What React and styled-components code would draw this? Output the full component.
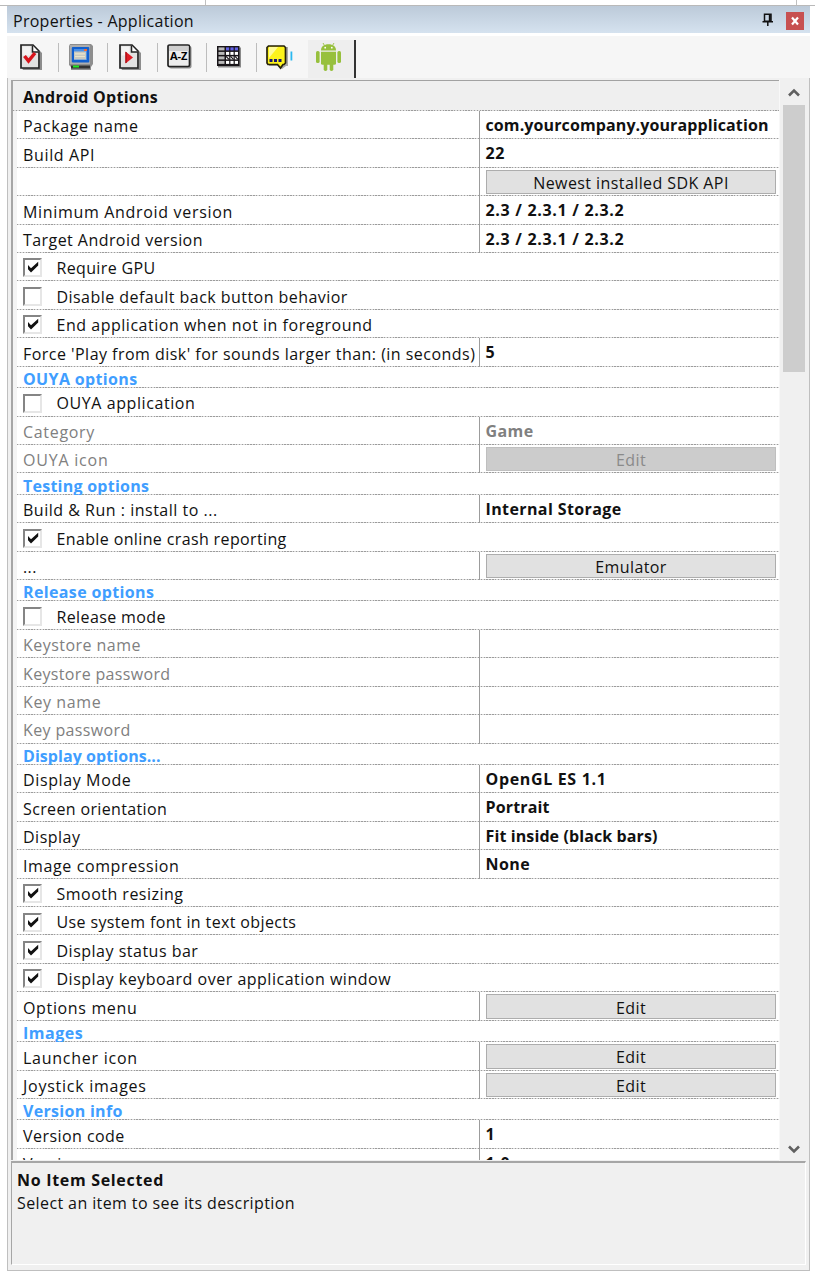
import React from "react";
import styled, { createGlobalStyle, css } from "styled-components";

const GlobalStyle = createGlobalStyle`
  html, body { margin: 0; padding: 0; background: #fff; }
  body {
    font-family: "Open Sans", "Noto Sans", sans-serif;
    font-size: 16px;
    color: #111;
    overflow: hidden;
  }
  *, *::before, *::after { box-sizing: border-box; }
`;

const ROW = "28.45px";
const HEADING = "21.34px";

const dotted = css`
  background-image: repeating-linear-gradient(90deg, #9c9c9c 0 1.42px, #dcdcdc 1.42px 2.845px);
  background-size: 100% 1px;
  background-repeat: no-repeat;
  background-position: left bottom;
`;

const Page = styled.div`
  display: flex;
  flex-direction: column;
  width: 815px;
  height: 1276px;
  background: #fff;
`;

const TopEdge = styled.div`
  display: flex;
  height: 6px;
  border-bottom: 1.5px solid #b9b9b9;
`;

const TopEdgeCell = styled.div`
  width: ${(p) => p.$w}px;
  border-right: 1px solid #c0c0c0;
`;

const Panel = styled.div`
  display: flex;
  flex-direction: column;
  width: 803px;
  margin-left: 7px;
`;

const TitleBar = styled.div`
  display: flex;
  align-items: center;
  height: 27px;
  padding: 0 6px;
  background: linear-gradient(#bccad9, #d5e2ef);
`;

const Title = styled.div`
  flex: 1;
  line-height: 27px;
  padding-top: 3px;
  letter-spacing: 0.27px;
`;

const CloseButton = styled.button`
  display: flex;
  align-items: center;
  justify-content: center;
  width: 18px;
  height: 18px;
  margin: 2px 0 0 12px;
  padding: 0;
  border: 0;
  background: #c75050;
`;

const Toolbar = styled.div`
  display: flex;
  height: 42px;
  margin-top: 3px;
  padding: 4px 0 0 2px;
  background: #f6f6f6;
`;

const Tool = styled.div`
  display: flex;
  width: 49.5px;
  height: 29px;
  margin-top: 3px;
  padding: 0 0 0 8px;
  border-right: ${(p) => (p.$last ? "0" : "1px solid #bdbdbd")};
`;

const ActiveTool = styled.div`
  display: flex;
  width: 48px;
  height: 38px;
  padding: 2px 0 0 7px;
  margin-left: 2px;
  background: #eeeeee;
  border-right: 2px solid #333;
`;

const Body = styled.div`
  display: flex;
  flex-direction: column;
  height: 1193px;
  padding: 2px 4px 0 3px;
  background: #f0f0f0;
  border: solid #bfbfbf;
  border-width: 0 1px 1.5px 1px;
`;

const ListArea = styled.div`
  display: flex;
  height: 1082px;
`;

const List = styled.div`
  width: 768px;
  height: 1080px;
  overflow: hidden;
  background: #fff;
  border-top: 1px solid #a2a2a2;
  border-left: 2px solid #a6a6a6;
`;

const ListInner = styled.div`
  padding-left: 4px;
  width: 766px;
  background: linear-gradient(90deg, #f4f4f4 4px, transparent 4px);
`;

const ListHeader = styled.div`
  ${dotted}
  height: 29.8px;
  margin-left: -4px;
  padding: 2px 0 0 10px;
  line-height: 28px;
  font-weight: 700;
  letter-spacing: 0.26px;
  background-color: #efefef;
`;

const Heading = styled.div`
  ${dotted}
  height: ${HEADING};
  padding: 2.2px 0 0 6px;
  overflow: hidden;
  line-height: ${HEADING};
  font-weight: 700;
  color: #409eff;
  white-space: nowrap;
  letter-spacing: ${(p) => p.$track}px;
`;

const Row = styled.div`
  ${dotted}
  display: flex;
  height: ${ROW};
  color: ${(p) => (p.$disabled ? "#808080" : "#111")};
`;

const Label = styled.div`
  width: 463px;
  padding: 1.4px 0 0 6px;
  line-height: ${ROW};
  white-space: nowrap;
  letter-spacing: ${(p) => p.$track}px;
  ${(p) => p.$divided && css`border-right: 1px solid #9c9c9c;`}
`;

const Value = styled.div`
  flex: 1;
  padding-left: 5.5px;
  line-height: 28px;
  font-weight: 700;
  white-space: nowrap;
  letter-spacing: ${(p) => p.$track}px;
`;

const PushButton = styled.button`
  width: 290px;
  height: 24.5px;
  margin: 2px 0 0 6px;
  padding: 2px 0 0;
  border: 1.5px solid ${(p) => (p.$disabled ? "#bfbfbf" : "#adadad")};
  background: ${(p) => (p.$disabled ? "#cccccc" : "#e1e1e1")};
  color: ${(p) => (p.$disabled ? "#8a8a8a" : "#111")};
  font: 16px/20px "Open Sans", "Noto Sans", sans-serif;
  letter-spacing: 0.42px;
`;

const CheckRow = styled(Row)`
  padding-left: 6px;
`;

const Box = styled.span`
  display: flex;
  width: 19px;
  height: 19px;
  margin-top: 5.5px;
  border: 2px solid;
  border-color: #858585 #e6e6e6 #e6e6e6 #858585;
  background: #fff;
`;

const CheckText = styled.span`
  padding: 1.4px 0 0 14.5px;
  line-height: ${ROW};
  white-space: nowrap;
  letter-spacing: ${(p) => p.$track}px;
`;

const Scrollbar = styled.div`
  display: flex;
  flex-direction: column;
  align-items: center;
  width: 26px;
  padding-left: 3px;
  border-left: 1px solid #f8f8f8;
`;

const Arrow = styled.div`
  display: flex;
  align-items: center;
  justify-content: center;
  width: 22px;
  height: 25px;
`;

const Track = styled.div`
  flex: 1;
  width: 22px;
`;

const Thumb = styled.div`
  height: 267px;
  background: #cdcdcd;
`;

const Description = styled.div`
  height: 104px;
  width: 795px;
  padding: 5.5px 0 0 5px;
  margin-top: -1px;
  border: solid;
  border-width: 2px 1px 1px 1px;
  border-color: #a6a6a6 #fff #fff #a6a6a6;
`;

const DescriptionTitle = styled.div`
  line-height: 23px;
  font-weight: 700;
  letter-spacing: 0.69px;
`;

const DescriptionText = styled.div`
  line-height: 23px;
  letter-spacing: 0.4px;
`;

const PageShape = () => (
  <>
    <path d="M5 25h18V8l2 2v17H6z" fill="#8d8d8d" />
    <path d="M4 2h12l6 6v17H4z" fill="#e2e2e2" stroke="#222" strokeWidth="1.7" />
    <path d="M5.5 3.5h8v9h-8z" fill="#f3f3f3" />
    <path d="M15.5 2.5v6.5h6" fill="#fff" stroke="#222" strokeWidth="1.5" />
  </>
);

const SettingsIcon = () => (
  <svg width="28" height="28" viewBox="0 0 28 28">
    <PageShape />
    <path d="M7.5 13l4 5 6.500-8" fill="none" stroke="#d8141c" strokeWidth="3.500" />
  </svg>
);

const WindowIcon = () => (
  <svg width="28" height="28" viewBox="0 0 28 28">
    <path d="M3 1h21l2 2v18l-2 3v3H4v-3l-2-2V3z" fill="#8e8e8e" />
    <path d="M3 2h19l1 1v18H3z" fill="#adadad" />
    <rect x="4.8" y="4" width="17.500" height="15.500" rx="1" fill="#1260cf" />
    <rect x="7" y="6" width="13" height="11" fill="#4b90e4" />
    <rect x="7" y="8.5" width="12" height="8" fill="#c9c9c0" />
    <path d="M8 10.8h10M8 13.5h10" stroke="#e9e5ca" strokeWidth="1.2" />
    <rect x="17" y="6" width="3" height="2" fill="#f06a35" />
    <rect x="4" y="22.500" width="19" height="3" fill="#333" />
    <rect x="6" y="22.500" width="6" height="2" fill="#1ee61e" />
  </svg>
);

const RuntimeIcon = () => (
  <svg width="28" height="28" viewBox="0 0 28 28">
    <PageShape />
    <path d="M9.5 8.5l7.5 6-7.5 6z" fill="#e01b24" />
    <path d="M10 9v11" stroke="#a60d14" strokeWidth="1.3" />
  </svg>
);

const GlyphText = styled.text`
  font: 700 10px "Open Sans", sans-serif;
`;

const AboutIcon = () => (
  <svg width="28" height="28" viewBox="0 0 28 28">
    <rect x="3" y="3" width="22.5" height="22.5" rx="2" fill="#909090" />
    <rect x="2" y="2" width="21.5" height="21.5" rx="1.5" fill="#ececec" stroke="#222" strokeWidth="1.7" />
    <rect x="3" y="3" width="19.5" height="5" fill="#cfcfcf" />
    <GlyphText x="4" y="16.500" textLength="17.500" lengthAdjust="spacingAndGlyphs">A-Z</GlyphText>
  </svg>
);

const GridIcon = () => (
  <svg width="28" height="28" viewBox="0 0 28 28">
    <rect x="3" y="4.500" width="23" height="20" fill="#8a8a8a" />
    <rect x="2" y="3" width="22.500" height="20" fill="#181418" />
    {[0, 1, 2, 3].map((r) => (
      <React.Fragment key={r}>
        <rect x="3.5" y={4.4 + r * 4.5} width="6" height="3" fill="#b9b9b9" />
        {[0, 1, 2].map((c) => (
          <rect key={c} x={11 + c * 4.4} y={4.4 + r * 4.5} width="3.2" height="3" fill={r === 0 ? "#6262e6" : "#fff"} />
        ))}
      </React.Fragment>
    ))}
    <path d="M11 13.400l3 3M15.5 13.400l3 3M20 13.400l3 3" stroke="#181418" strokeWidth="1.2" />
  </svg>
);

const EventsIcon = () => (
  <svg width="28" height="28" viewBox="0 0 28 28">
    <path d="M4 4h19v19h-2l-4 3-4-3H4z" fill="#a8a8a8" />
    <path d="M3.5 3h15.5l1.5 1.5v15.5l-1.5 1.5h-1l-2.5 3.500-3-3.500h-9.500l-1-1.5V4.500z" fill="#fdf31c" stroke="#26220a" strokeWidth="1.7" />
    <path d="M4 4h9L4 15z" fill="#fffb9a" />
    <path d="M4.500 16h3v3h-3zM9 16h3v3h-3zM13.500 16h3v3h-3z" fill="#15156e" />
    <rect x="25.5" y="8.500" width="1.8" height="9" fill="#2ab8f0" />
  </svg>
);

const AndroidIcon = () => (
  <svg width="28" height="30" viewBox="0 0 28 30">
    <g fill="#97c03d">
      <path d="M6 8.5C6 4.5 9 2.3 13.5 2.3S21 4.5 21 8.5z" />
      <path d="M6 9.7h15v11.500a1.5 1.5 0 0 1-1.5 1.5h-12A1.5 1.5 0 0 1 6 21.2z" />
      <rect x="1" y="9" width="3.6" height="12" rx="1.6" />
      <rect x="22.4" y="9" width="3.6" height="12" rx="1.6" />
      <rect x="8.7" y="20" width="3.6" height="9" rx="1.7" />
      <rect x="14.7" y="20" width="3.6" height="9" rx="1.7" />
    </g>
    <path d="M9.5 3.5L8 1M17.5 3.5L19 1" stroke="#97c03d" strokeWidth="0.9" />
    <circle cx="10.2" cy="5.7" r="0.9" fill="#fff" />
    <circle cx="16.8" cy="5.7" r="0.9" fill="#fff" />
  </svg>
);

const PinIcon = () => (
  <svg width="12" height="14" viewBox="0 0 12 14">
    <path d="M2.5 1.2h6.500v7H2.5zM0.5 8.7h10.500M5.8 9v4" fill="none" stroke="#111" strokeWidth="1.5" />
    <path d="M7.8 1v7.5" stroke="#111" strokeWidth="2" />
  </svg>
);

const CloseIcon = () => (
  <svg width="10" height="10" viewBox="0 0 10 10">
    <path d="M2 1.5l6 7M8 1.5l-6 7" stroke="#fff" strokeWidth="2.2" />
  </svg>
);

const CheckMark = () => (
  <svg width="15" height="15" viewBox="0 0 15 15">
    <path d="M3 5l3 3.200L13.200 1.700v3.900L6 12.500l-3-3.200z" fill="#111" />
  </svg>
);

const Chevron = ({ down }) => (
  <svg width="12" height="9" viewBox="0 0 12 9">
    <path d={down ? "M1 1.5l5 5 5-5" : "M1 7.5l5-5 5 5"} fill="none" stroke="#606060" strokeWidth="2.6" />
  </svg>
);

const rows = [
  { label: "Package name", t: 0.65, value: "com.yourcompany.yourapplication", vt: 0.11 },
  { label: "Build API", t: 0.65, value: "22", vt: 0.7 },
  { label: "", button: "Newest installed SDK API" },
  { label: "Minimum Android version", t: 0.68, value: "2.3 / 2.3.1 / 2.3.2", vt: 0.69 },
  { label: "Target Android version", t: 0.44, value: "2.3 / 2.3.1 / 2.3.2", vt: 0.69 },
  { check: "Require GPU", t: 0.35, on: true },
  { check: "Disable default back button behavior", t: 0.45 },
  { check: "End application when not in foreground", t: 0.52, on: true },
  { label: "Force 'Play from disk' for sounds larger than: (in seconds)", t: 0.47, value: "5", vt: 0 },
  { heading: "OUYA options", t: 0.36 },
  { check: "OUYA application", t: 0.58 },
  { label: "Category", t: 0.68, value: "Game", vt: 0.4, off: true },
  { label: "OUYA icon", t: 0.78, button: "Edit", off: true },
  { heading: "Testing options", t: 0.25 },
  { label: "Build & Run : install to ...", t: 0.51, value: "Internal Storage", vt: 0.39 },
  { check: "Enable online crash reporting", t: 0.37, on: true },
  { label: "...", t: 0.4, button: "Emulator" },
  { heading: "Release options", t: 0.36 },
  { check: "Release mode", t: 0.38 },
  { label: "Keystore name", t: 0.46, value: "", off: true },
  { label: "Keystore password", t: 0.34, value: "", off: true },
  { label: "Key name", t: 0.6, value: "", off: true },
  { label: "Key password", t: 0.37, value: "", off: true },
  { heading: "Display options...", t: 0.06 },
  { label: "Display Mode", t: 0.62, value: "OpenGL ES 1.1", vt: 0.66 },
  { label: "Screen orientation", t: 0.36, value: "Portrait", vt: 0.15 },
  { label: "Display", t: 0.5, value: "Fit inside (black bars)", vt: 0.11 },
  { label: "Image compression", t: 0.61, value: "None", vt: 0.45 },
  { check: "Smooth resizing", t: 0.48, on: true },
  { check: "Use system font in text objects", t: 0.37, on: true },
  { check: "Display status bar", t: 0.5, on: true },
  { check: "Display keyboard over application window", t: 0.51, on: true },
  { label: "Options menu", t: 0.65, button: "Edit" },
  { heading: "Images", t: 0.5 },
  { label: "Launcher icon", t: 0.75, button: "Edit" },
  { label: "Joystick images", t: 0.74, button: "Edit" },
  { heading: "Version info", t: 0.3 },
  { label: "Version code", t: 0.45, value: "1", vt: 0 },
  { label: "Version", t: 0.4, value: "1.0", vt: 0.7 },
];

const Item = ({ row }) => {
  if (row.heading) return <Heading $track={row.t}>{row.heading}</Heading>;
  if (row.check)
    return (
      <CheckRow>
        <Box>{row.on && <CheckMark />}</Box>
        <CheckText $track={row.t}>{row.check}</CheckText>
      </CheckRow>
    );
  return (
    <Row $disabled={row.off}>
      <Label $divided $track={row.t || 0}>{row.label}</Label>
      {row.button ? (
        <PushButton $disabled={row.off}>{row.button}</PushButton>
      ) : (
        <Value $track={row.vt || 0}>{row.value}</Value>
      )}
    </Row>
  );
};

export default function App() {
  return (
    <Page>
      <GlobalStyle />
      <TopEdge>
        <TopEdgeCell $w={206} />
        <TopEdgeCell $w={591} />
      </TopEdge>
      <Panel>
        <TitleBar>
          <Title>Properties - Application</Title>
          <PinIcon />
          <CloseButton aria-label="Close">
            <CloseIcon />
          </CloseButton>
        </TitleBar>
        <Toolbar>
          <Tool><SettingsIcon /></Tool>
          <Tool><WindowIcon /></Tool>
          <Tool><RuntimeIcon /></Tool>
          <Tool><AboutIcon /></Tool>
          <Tool><GridIcon /></Tool>
          <Tool $last><EventsIcon /></Tool>
          <ActiveTool><AndroidIcon /></ActiveTool>
        </Toolbar>
        <Body>
          <ListArea>
            <List>
              <ListInner>
                <ListHeader>Android Options</ListHeader>
                {rows.map((row, i) => (
                  <Item key={i} row={row} />
                ))}
              </ListInner>
            </List>
            <Scrollbar>
              <Arrow><Chevron /></Arrow>
              <Track><Thumb /></Track>
              <Arrow><Chevron down /></Arrow>
            </Scrollbar>
          </ListArea>
          <Description>
            <DescriptionTitle>No Item Selected</DescriptionTitle>
            <DescriptionText>Select an item to see its description</DescriptionText>
          </Description>
        </Body>
      </Panel>
    </Page>
  );
}
